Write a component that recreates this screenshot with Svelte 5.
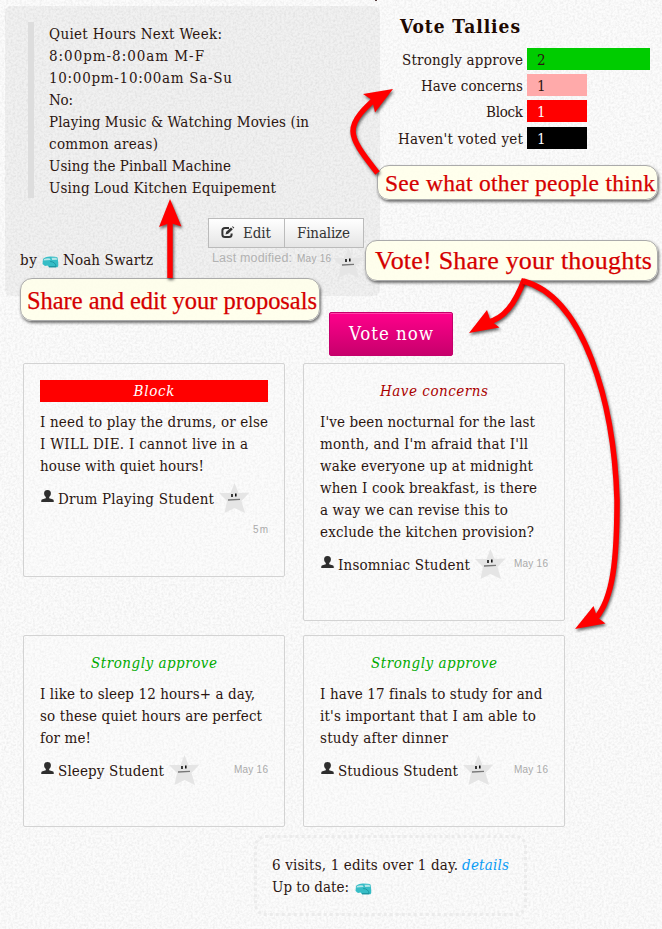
<script>
  const proposal = [
    ['Quiet Hours Next Week:', 173],
    ['8:00pm-8:00am M-F', 155],
    ['10:00pm-10:00am Sa-Su', 183],
    ['No:', 24],
    ['Playing Music & Watching Movies (in', 260],
    ['common areas)', 109],
    ['Using the Pinball Machine', 182],
    ['Using Loud Kitchen Equipement', 227]
  ];

  const tallies = [
    { label: 'Strongly approve', w: 121, count: 2, bar: 123, kind: 'approve' },
    { label: 'Have concerns', w: 102, count: 1, bar: 60, kind: 'concerns' },
    { label: 'Block', w: 37, count: 1, bar: 60, kind: 'block' },
    { label: "Haven't voted yet", w: 125, count: 1, bar: 60, kind: 'none' }
  ];

  const rows = [
    [
      {
        vote: 'Block', vw: 41, kind: 'block', height: 214,
        lines: [['I need to play the drums, or else', 228], ['I WILL DIE. I cannot live in a', 208], ['house with quiet hours!', 164]],
        user: 'Drum Playing Student', uw: 156, date: '5m', dw: 15, wrap: true
      },
      {
        vote: 'Have concerns', vw: 108, kind: 'concerns', height: 258,
        lines: [["I've been nocturnal for the last", 215], ["month, and I'm afraid that I'll", 208], ['wake everyone up at midnight', 213], ['when I cook breakfast, is there', 217], ['a way we can revise this to', 188], ['exclude the kitchen provision?', 214]],
        user: 'Insomniac Student', uw: 132, date: 'May 16', dw: 34
      }
    ],
    [
      {
        vote: 'Strongly approve', vw: 126, kind: 'approve', height: 192,
        lines: [['I like to sleep 12 hours+ a day,', 215], ['so these quiet hours are perfect', 222], ['for me!', 51]],
        user: 'Sleepy Student', uw: 106, date: 'May 16', dw: 34
      },
      {
        vote: 'Strongly approve', vw: 126, kind: 'approve', height: 192,
        lines: [['I have 17 finals to study for and', 222], ["it's important that I am able to", 216], ['study after dinner', 128]],
        user: 'Studious Student', uw: 120, date: 'May 16', dw: 34
      }
    ]
  ];

  // Tracks a run of text so that it fills the given measure.
  function fit(node, width) {
    const n = node.textContent.length;
    node.style.letterSpacing = '0px';
    const natural = node.getBoundingClientRect().width;
    const gap = (width - natural) / (n > 1 ? n - 1 : 1);
    node.style.letterSpacing = gap + 'px';
    node.style.marginRight = -gap + 'px';
  }
</script>

{#snippet star()}
  <svg class="star" width="31" height="31" viewBox="0 0 31 31">
    <path d="M15.5 0 19.5 10 30.5 9.5 22.5 18 26 30 15.5 25 5.5 30 8 18 0 10 11.5 10Z" fill="#e5e5e5" />
    <path d="M13 11v3M16.800 10.600v3" stroke="#111" stroke-width="1.6" />
    <path d="M9 17l12-.6" stroke="#777" stroke-width="1.3" />
  </svg>
{/snippet}

{#snippet van()}
  <svg class="van" width="17" height="12" viewBox="0 0 17 12">
    <path d="M1 3Q3 .5 8 .5q6 0 7.500 1L16.200 6v4l-.7 1.300H7L5.500 9.500 3 10 .5 8Z" fill="#36bdc6" />
    <path d="M2 3q4-1.500 6-.4l.5 1.400-7 .6ZM9.500 1.800h5l.7 1.900-5 .2Z" fill="#b4e6e8" />
    <path d="M8.200 5.500q5 .2 6 5" stroke="#1c98a3" fill="none" />
    <path d="M7 10.800h7" stroke="#168792" />
  </svg>
{/snippet}

{#snippet person()}
  <svg class="person" width="13" height="12" viewBox="0 0 13 12">
    <path d="M6.500 0C9 0 9.900 1.300 9.900 3.200 9.900 5 9.200 6.200 8.200 7v1.200l4 1.300q.6.300.6 2.500H.2q0-2.200.6-2.500l4-1.300V7C3.800 6.200 3.100 5 3.100 3.200 3.100 1.300 4 0 6.500 0Z" fill="#2e2e2e" />
  </svg>
{/snippet}

<div class="page">
  <svg class="grain" width="662" height="929" aria-hidden="true">
    <filter id="grain" x="0" y="0" width="100%" height="100%" color-interpolation-filters="sRGB">
      <feTurbulence type="fractalNoise" baseFrequency="0.45" numOctaves="2" seed="4" />
      <feColorMatrix values="0 0 0 0 0  0 0 0 0 0  0 0 0 0 0  0.12 0 0 0 -0.043" />
    </filter>
    <rect width="662" height="929" filter="url(#grain)" />
  </svg>

  <header>
    <section class="proposal">
      <blockquote>
        {#each proposal as [text, w]}
          <div><span use:fit={w}>{text}</span></div>
        {/each}
      </blockquote>
      <div class="foot">
        <div class="author"><span use:fit={17}>by</span>{@render van()}<span use:fit={90}>Noah Swartz</span></div>
        <div class="actions">
          <div class="buttons">
            <button>
              <svg width="14" height="13" viewBox="0 0 14 13">
                <path d="M8 2H4Q1.400 2 1.400 4.500v4Q1.400 11 4 11h4q2.600 0 2.600-2.500V7.500" fill="none" stroke="#333" stroke-width="2" />
                <path d="M4.500 8.500 5.200 5.700 10 1.400 11.800 3.200 7.200 7.800ZM11 .8l.8-.6 1.500 1.500-.7.800Z" fill="#333" />
              </svg>
              <span use:fit={28}>Edit</span>
            </button><button><span use:fit={53}>Finalize</span></button>
          </div>
          <div class="modified"><span class="lm" use:fit={80}>Last modified:</span><span class="date" use:fit={34}>May 16</span>{@render star()}</div>
        </div>
      </div>
    </section>

    <section class="tallies">
      <h2><span use:fit={120}>Vote Tallies</span></h2>
      {#each tallies as t}
        <div class="tally {t.kind}">
          <div class="label"><span use:fit={t.w}>{t.label}</span></div>
          <div class="bar" style="width:{t.bar}px">{t.count}</div>
        </div>
      {/each}
    </section>
  </header>

  <div class="cta"><button class="vote"><span use:fit={84}>Vote now</span></button></div>

  <main>
    {#each rows as row}
      <div class="row">
        {#each row as c}
          <article style="height:{c.height}px">
            <div class="verdict {c.kind}"><span use:fit={c.vw}>{c.vote}</span></div>
            <div class="words">
              {#each c.lines as [text, w]}
                <div><span use:fit={w}>{text}</span></div>
              {/each}
            </div>
            <div class="by" class:wrap={c.wrap}>
              {@render person()}<span use:fit={c.uw}>{c.user}</span>{@render star()}
              <div class="when"><span class="date" use:fit={c.dw}>{c.date}</span></div>
            </div>
          </article>
        {/each}
      </div>
    {/each}
  </main>

  <footer>
    <svg class="dots" width="273" height="81"><rect x="1.5" y="1.5" width="270" height="78" rx="10" fill="none" stroke="#ebebeb" stroke-width="3" stroke-dasharray="3 3" /></svg>
    <div><span use:fit={186}>6 visits, 1 edits over 1 day.</span><a href="#details"><span use:fit={47}>details</span></a></div>
    <div><span use:fit={77}>Up to date:</span>{@render van()}</div>
  </footer>

  <div class="note share"><span use:fit={290}>Share and edit your proposals</span></div>
  <div class="note see"><span use:fit={270}>See what other people think</span></div>
  <div class="note thoughts"><span use:fit={277}>Vote! Share your thoughts</span></div>

  <svg class="arrows" width="662" height="929">
    <path d="M375 0h2" stroke="#200" stroke-width="1.5" />
    <g class="arrow"><path d="M170 278V222" /><path class="head" d="M170 199 181.500 226.500 170 223 159 227Z" /></g>
    <g class="arrow"><path d="M377.500 173C366 158 353 143 353 131C353 119 365 108 377 97" /><path class="head" d="M393 89 375 112.500 372 100 363 94Z" /></g>
    <g class="arrow"><path d="M524.500 279C515 304 504 319 487 322.500" /><path class="head" d="M469 333 487 310 490.500 320.500 499.500 327.500Z" /></g>
    <g class="arrow"><path d="M523 281C584 297 614 402 617 500C617 560 613 598 596 618" /><path class="head" d="M575 629 593.500 606 597 617 605.500 623.500Z" /></g>
  </svg>
</div>

<style>
  :global(body) { margin: 0; background: #fcfcfc; }
  .page { position: relative; width: 662px; height: 929px; overflow: hidden; font: 15px/22px 'DejaVu Serif Condensed', 'DejaVu Serif', serif; font-stretch: condensed; color: #2b1510; isolation: isolate; }
  .page span { white-space: pre; display: inline-block; }
  .grain { position: absolute; inset: 0; z-index: -1; }
  header { display: flex; gap: 14px; padding: 6px 0 0 5px; height: 290px; }
  .proposal { width: 375px; height: 290px; box-sizing: border-box; padding: 16px 16px 0 15px; border-radius: 6px; background: rgba(0, 0, 0, .042); display: flex; flex-direction: column; }
  blockquote { margin: 0 0 0 8px; padding: 1px 0 0 15px; border-left: 6px solid #ddd; height: 175px; }
  .foot { display: flex; justify-content: space-between; margin-top: 20px; }
  .author { display: flex; align-items: center; height: 22px; margin-top: 31px; }
  .author .van { margin: 3px 4px 0 5px; }
  .buttons { display: flex; }
  button { font: inherit; color: #333; cursor: pointer; }
  .buttons button { display: flex; align-items: center; height: 30px; padding: 0 11px 0 12px; border: 1px solid #bbb; background: linear-gradient(#fff, #e5e5e5); }
  .buttons button + button { margin-left: -1px; }
  .buttons button svg { margin: -2px 8px 0 0; flex: none; }
  .buttons button:last-child { width: 80px; }
  .buttons button:first-child { width: 77px; }
  .modified { display: flex; align-items: center; font-family: 'Liberation Sans', sans-serif; color: #b2b2b2; height: 20px; padding-left: 4px; }
  .lm { font-size: 12.500px; }
  .date { font: 10px/12px 'Liberation Sans', sans-serif; color: #aaa; }
  .modified .date { margin-left: 5px; padding-top: 2px; }
  .modified .star { margin: 11px -10px 0 2px; flex: none; }
  .tallies { padding-top: 8px; width: 264px; }
  h2 { margin: 0 0 9px 6px; font-size: 19px; line-height: 25px; color: #200800; }
  .tally { display: flex; height: 22px; margin-bottom: 4px; gap: 4px; }
  .tally.block { margin-bottom: 5px; }
  .label { width: 129px; text-align: right; padding-top: 1px; height: 21px; }
  .bar { box-sizing: border-box; height: 22px; padding: 1px 0 0 10px; }
  .approve .bar { background: #0c0; }
  .concerns .bar { background: #faa; }
  .block .bar { background: red; color: #fff; }
  .none .bar { background: #000; color: #fff; }
  .cta { padding: 16px 0 7px 329px; }
  .vote { display: block; width: 124px; height: 44px; border: 1px solid #c4006b; border-radius: 2px; background: linear-gradient(#ff008b, #c7006c); box-shadow: inset 0 1px #ff42a8; color: #fff; font-size: 18.500px; padding: 0; }
  main { display: flex; flex-direction: column; gap: 14px; padding-left: 23px; }
  .row { display: flex; align-items: flex-start; gap: 18px; }
  article { box-sizing: border-box; width: 262px; border: 1px solid #d3d3d3; border-radius: 2px; padding: 16px; background: rgba(255, 255, 255, .2); }
  .verdict { text-align: center; font-style: italic; height: 22px; line-height: 23px; }
  .verdict.block { background: red; color: #fff; }
  .verdict.concerns { color: #a00; }
  .verdict.approve { color: #0a0; }
  .words { margin-top: 9px; }
  .by { display: flex; flex-wrap: wrap; align-items: center; margin-top: 6px; row-gap: 2px; }
  .person { margin: -5px 4px 0 1px; flex: none; }
  .star { margin-left: 5px; flex: none; }
  .when { margin-left: auto; margin-top: -2px; height: 12px; display: flex; }
  .wrap .when { width: 100%; justify-content: flex-end; margin-top: 8px; }
  footer { position: relative; width: 255px; height: 62px; margin: 8px 0 0 254px; padding: 19px 0 0 18px; }
  footer > div { display: flex; align-items: center; }
  .dots { position: absolute; left: 0; top: 0; }
  footer a { margin-left: 4px; color: #0a9cf5; font-style: italic; text-decoration: none; }
  footer .van { margin: 3px 0 0 6px; }
  .note { position: absolute; box-sizing: border-box; border: 1px solid #aaa; border-radius: 12px; background: rgba(255, 255, 235, .9); box-shadow: 1px 2px 3px rgba(0, 0, 0, .55); color: #d50000; font-family: 'Liberation Serif', serif; font-size: 24.500px; -webkit-text-stroke: .25px #d50000; }
  .share { left: 20px; top: 278px; width: 300px; height: 43px; padding-left: 6px; line-height: 43px; }
  .see { left: 377px; top: 165px; width: 281px; height: 35px; padding-left: 7px; line-height: 34px; font-size: 23.500px; }
  .thoughts { left: 365px; top: 240px; width: 293px; height: 41px; padding-left: 9px; line-height: 39px; font-size: 26px; }
  .arrows { position: absolute; left: 0; top: 0; pointer-events: none; }
  .arrow { filter: drop-shadow(1px 2px 1.500px rgba(0, 0, 0, .6)); }
  .arrow path { fill: none; stroke: #f00; stroke-width: 5.500; }
  .arrow .head { fill: #f00; stroke: none; }
</style>
